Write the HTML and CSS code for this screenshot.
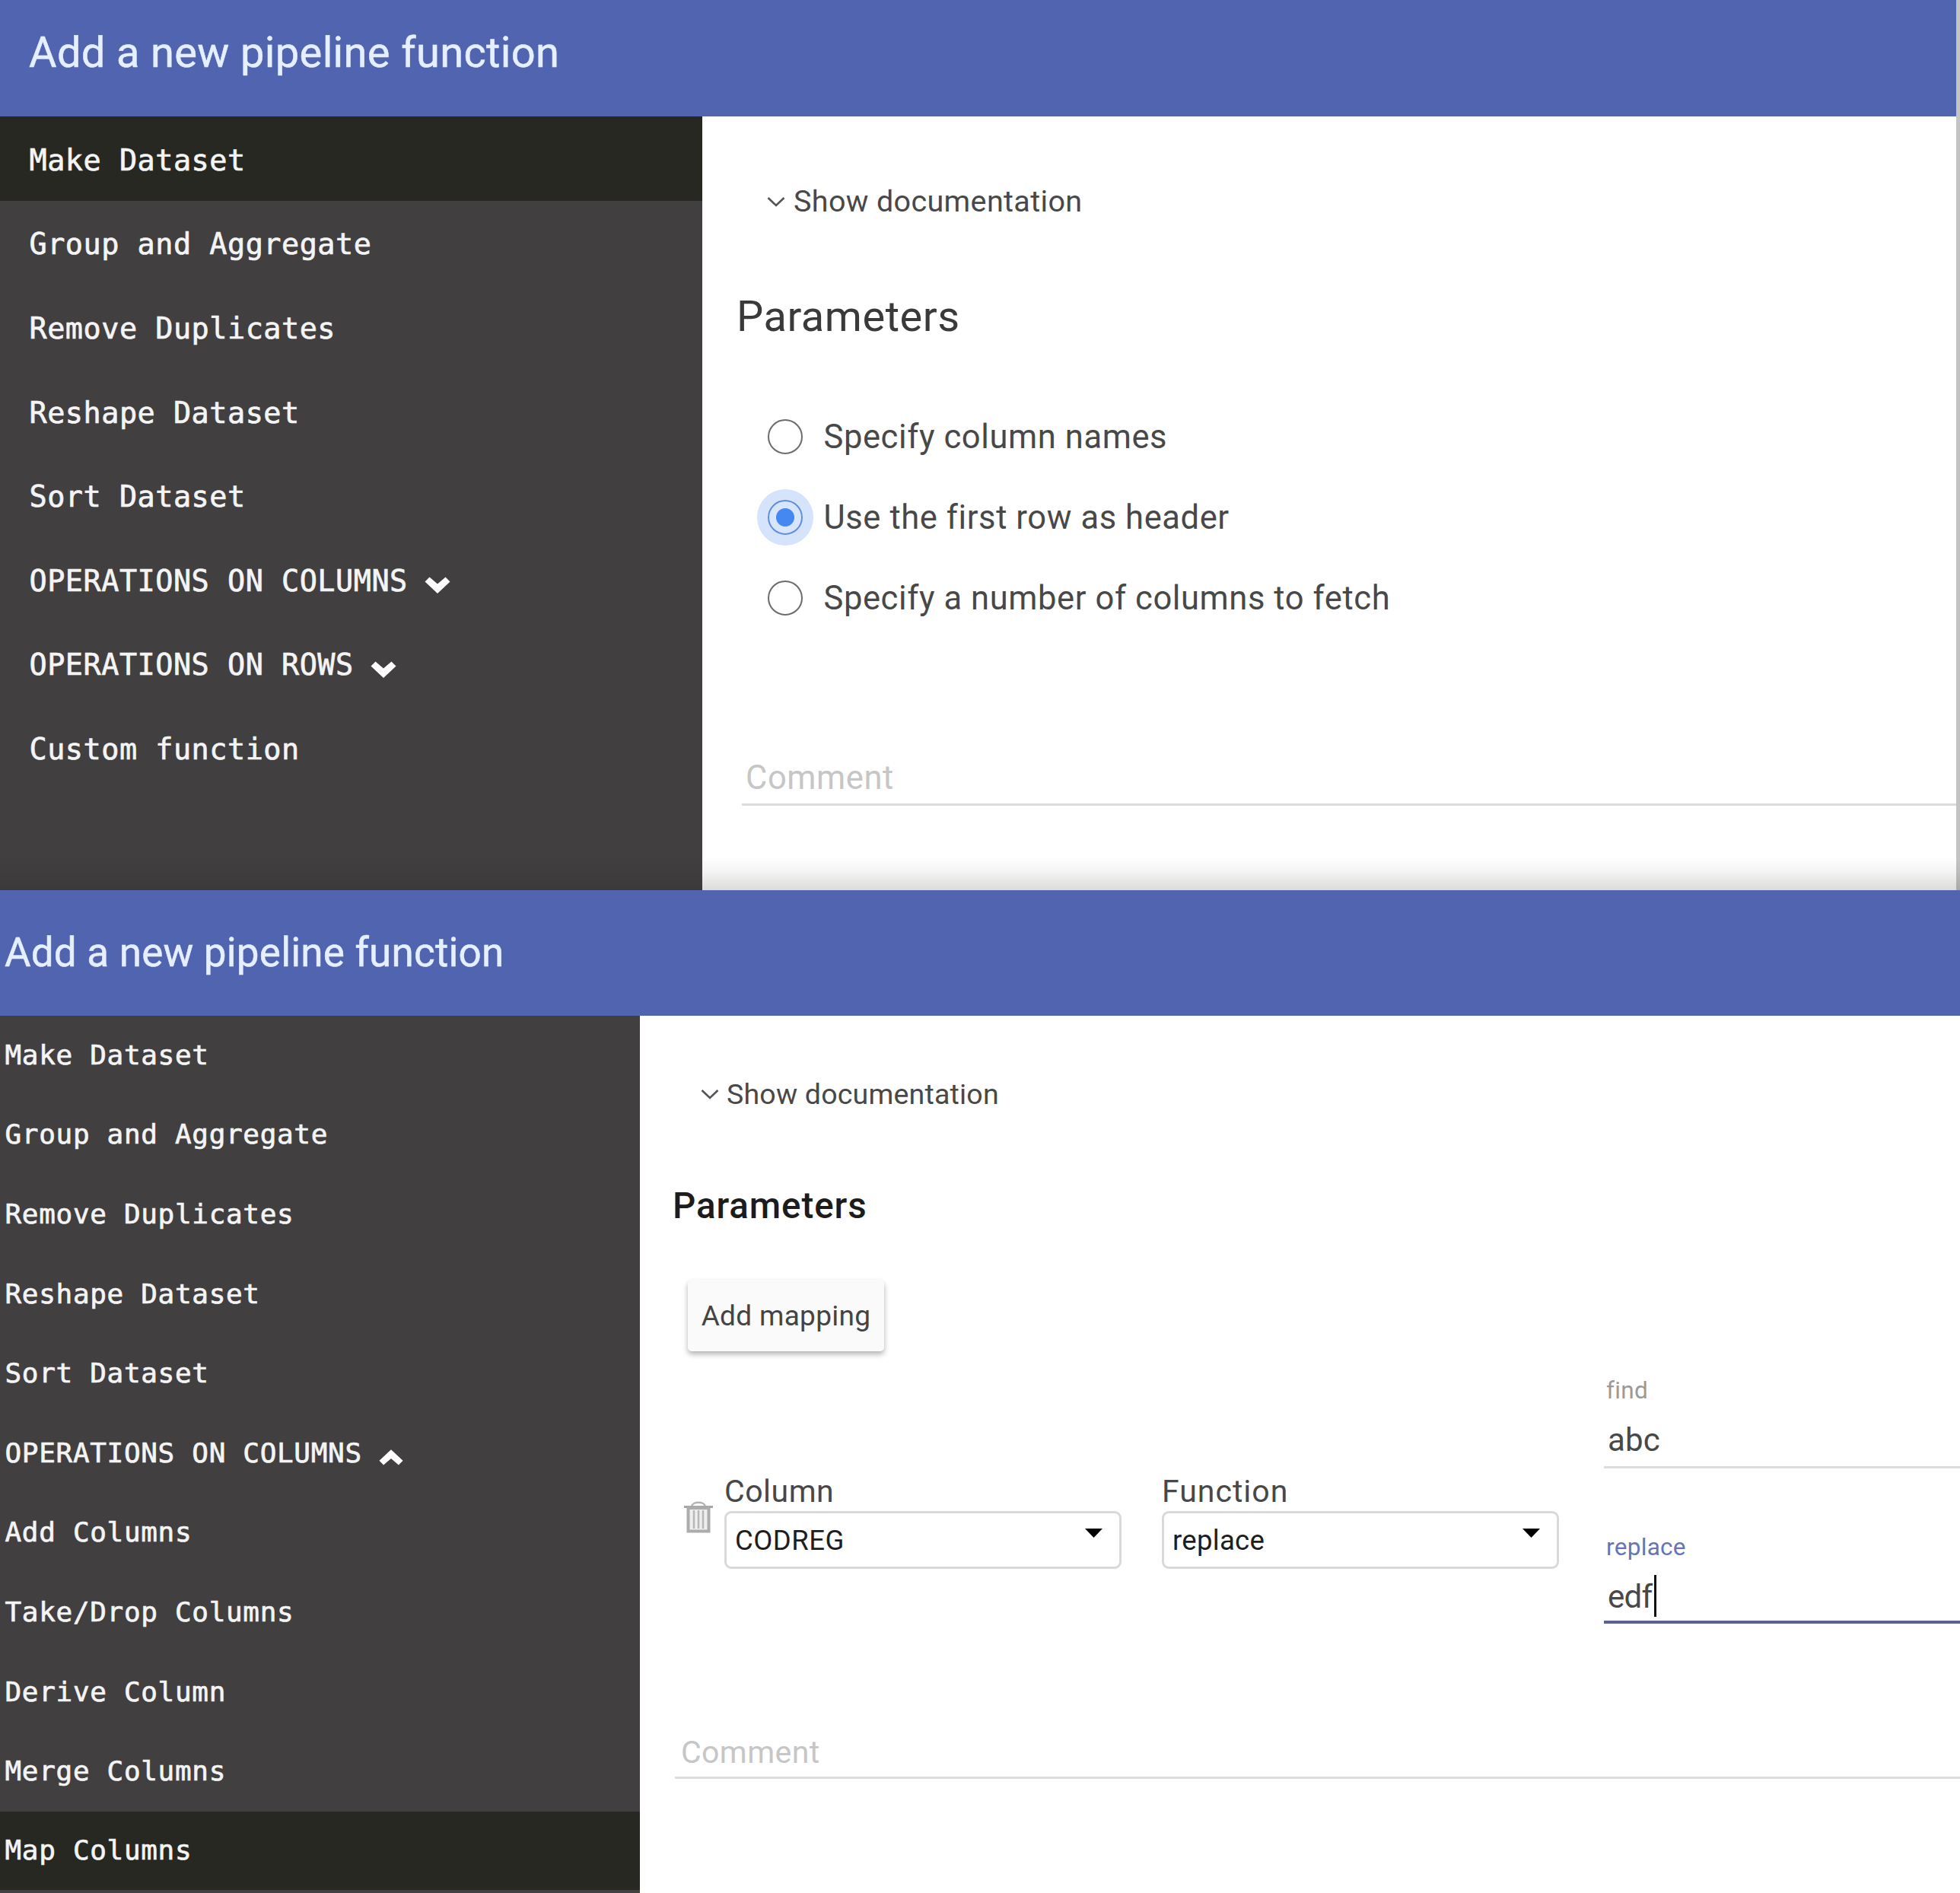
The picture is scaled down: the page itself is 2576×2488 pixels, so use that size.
FILE: index.html
```
<!DOCTYPE html>
<html lang="en">
<head>
<meta charset="utf-8">
<title>Add a new pipeline function</title>
<link rel="stylesheet" href="styles.css">
</head>
<body>
<section class="dialog dialog-make">
  <header class="bar"><h1>Add a new pipeline function</h1></header>
  <div class="body">
    <nav class="menu">
      <a class="item active">Make Dataset</a>
      <a class="item">Group and Aggregate</a>
      <a class="item">Remove Duplicates</a>
      <a class="item">Reshape Dataset</a>
      <a class="item">Sort Dataset</a>
      <a class="item">OPERATIONS ON COLUMNS<svg class="caret" viewBox="0 0 34 22"><path d="M0.5 6.500 6.500 0.5 17 9.500 27.500 0.500 33.500 6.500 17 22Z"/></svg></a>
      <a class="item">OPERATIONS ON ROWS<svg class="caret" viewBox="0 0 34 22"><path d="M0.5 6.500 6.500 0.5 17 9.500 27.500 0.500 33.500 6.500 17 22Z"/></svg></a>
      <a class="item">Custom function</a>
    </nav>
    <main class="content">
      <div class="doc"><svg class="chevron" viewBox="0 0 24 14"><path d="M1.500 2 12 12 22.500 2"/></svg><span>Show documentation</span></div>
      <h2 class="heading">Parameters</h2>
      <div class="options">
        <label class="option"><i class="radio"></i><span>Specify column names</span></label>
        <label class="option"><i class="radio checked"></i><span>Use the first row as header</span></label>
        <label class="option"><i class="radio"></i><span>Specify a number of columns to fetch</span></label>
      </div>
      <div class="comment">Comment</div>
    </main>
  </div>
</section>
<section class="dialog dialog-map">
  <header class="bar"><h1>Add a new pipeline function</h1></header>
  <div class="body">
    <nav class="menu">
      <a class="item">Make Dataset</a>
      <a class="item">Group and Aggregate</a>
      <a class="item">Remove Duplicates</a>
      <a class="item">Reshape Dataset</a>
      <a class="item">Sort Dataset</a>
      <a class="item">OPERATIONS ON COLUMNS<svg class="caret" viewBox="0 0 34 22"><path d="M0.5 15.500 6.500 21.5 17 12.500 27.500 21.500 33.500 15.500 17 0Z"/></svg></a>
      <a class="item">Add Columns</a>
      <a class="item">Take/Drop Columns</a>
      <a class="item">Derive Column</a>
      <a class="item">Merge Columns</a>
      <a class="item active">Map Columns</a>
    </nav>
    <main class="content">
      <div class="doc"><svg class="chevron" viewBox="0 0 24 14"><path d="M1.500 2 12 12 22.500 2"/></svg><span>Show documentation</span></div>
      <h2 class="heading">Parameters</h2>
      <button class="add">Add mapping</button>
      <div class="mapping">
        <svg class="trash" viewBox="0 0 38 43"><path d="M10 8C11 1 27 1 28 8" fill="none" stroke="#b4b4b4" stroke-width="2.500"/><path d="M0 7H38V10H0Z" fill="#a6a6a6"/><path d="M5.500 10H32.500V40.500H5.500Z" fill="#eee" stroke="#acacac" stroke-width="4"/><path d="M13 13V37M19 13V37M25 13V37" stroke="#b8b8b8" stroke-width="2.500"/></svg>
        <div class="pick pick-column"><span class="label">Column</span><div class="select">CODREG<svg class="arrow" viewBox="0 0 23 12"><path d="M0 0H23L11.500 12Z"/></svg></div></div>
        <div class="pick pick-function"><span class="label">Function</span><div class="select">replace<svg class="arrow" viewBox="0 0 23 12"><path d="M0 0H23L11.500 12Z"/></svg></div></div>
        <div class="args">
          <div class="arg"><span class="hint">find</span><div class="value">abc</div></div>
          <div class="arg focused"><span class="hint">replace</span><div class="value">edf<i class="cursor"></i></div></div>
        </div>
      </div>
      <div class="comment">Comment</div>
    </main>
  </div>
</section>
</body>
</html>
```
FILE: styles.css
```
* { box-sizing: border-box; }
body {
  margin: 0;
  width: 2576px;
  height: 2488px;
  overflow: hidden;
  background: #fff;
  color: #484848;
  font-family: Roboto, "Liberation Sans", sans-serif;
}
h1, h2 { margin: 0; font-weight: 400; }
svg { display: block; flex: none; }

.dialog { display: flex; flex-direction: column; }
.bar { flex: none; background: #5164af; color: #e6efff; }
.bar h1 { -webkit-text-stroke: .5px #e6efff; }
.body { flex: 1; display: flex; min-height: 0; }
.menu { flex: none; background: #413f40; color: #f4f4f4; }
.item {
  display: flex;
  align-items: center;
  white-space: pre;
  font-family: "DejaVu Sans Mono", monospace;
  -webkit-text-stroke: .7px #f4f4f4;
}
.active { background: #272822; }
.caret { width: 34px; height: 22px; fill: #fff; }
.content { flex: 1; min-width: 0; display: flex; flex-direction: column; }
.doc { display: flex; align-items: center; }
.chevron { width: 24px; height: 14px; fill: none; stroke: #555; stroke-width: 2.6; }
.comment { border-bottom: 3px solid #dcdcdc; color: #c6c6c6; line-height: 50px; }

/* Make Dataset dialog */
.dialog-make {
  position: relative;
  height: 1170px;
  background: linear-gradient(#c4c4c4, #c4c4c4) right / 5px 100% no-repeat;
  padding-right: 5px;
}
.dialog-make::after {
  content: "";
  position: absolute;
  left: 0;
  right: 0;
  bottom: 0;
  height: 44px;
  background: linear-gradient(rgba(30, 30, 20, 0), rgba(30, 30, 20, .05) 45%, rgba(30, 30, 20, .16));
}
.dialog-make .bar { height: 153px; padding: 37px 0 0 38px; }
.dialog-make h1 { font-size: 56px; line-height: 64px; letter-spacing: .35px; }
.dialog-make .menu { width: 923px; }
.dialog-make .item {
  height: 110.6px;
  padding: 4px 0 0 38.5px;
  font-size: 38.5px;
  letter-spacing: .5px;
}
.dialog-make .caret { margin: 12px 0 0 22px; }
.dialog-make .content { padding-top: 87px; }
.dialog-make .doc {
  margin-left: 85px;
  gap: 11px;
  font-size: 39.5px;
  line-height: 50px;
  letter-spacing: .35px;
}
.dialog-make .heading {
  margin: 91px 0 0 45px;
  font-size: 56px;
  line-height: 70px;
  letter-spacing: .5px;
  color: #3a3a3a;
}
.options { margin: 70px 0 0 86px; }
.option {
  display: flex;
  align-items: center;
  gap: 27.5px;
  height: 106px;
  font-size: 43.5px;
  letter-spacing: .6px;
}
.radio {
  width: 46px;
  height: 46px;
  border: 2.5px solid #6c6c6c;
  border-radius: 50%;
}
.radio.checked {
  border-color: #5b8fe0;
  background: radial-gradient(circle, #4688f1 11.5px, #d8e6fd 12.5px);
  box-shadow: 0 0 0 14px #d5e3fb;
}
.dialog-make .comment {
  height: 61px;
  margin: 159px 0 0 52px;
  padding-left: 5px;
  font-size: 43.5px;
  letter-spacing: .6px;
}

/* Map Columns dialog */
.dialog-map { height: 1318px; }
.dialog-map .bar { height: 165px; padding: 50px 0 0 6px; }
.dialog-map h1 { font-size: 53px; line-height: 64px; letter-spacing: .2px; }
.dialog-map .menu { width: 841px; }
.dialog-map .item {
  height: 104.6px;
  padding: 0 0 2px 6.5px;
  font-size: 36px;
  letter-spacing: .67px;
}
.dialog-map .active { height: 103.500px; }
.dialog-map .caret { width: 32px; height: 21px; margin: 12px 0 0 22px; }
.dialog-map .content { padding-top: 80px; }
.dialog-map .doc {
  margin-left: 80px;
  gap: 10px;
  font-size: 37.5px;
  line-height: 46px;
  letter-spacing: .2px;
}
.dialog-map .heading {
  margin: 94px 0 0 43px;
  font-size: 47.5px;
  line-height: 60px;
  letter-spacing: .9px;
  font-weight: 500;
  color: #1c1c1c;
}
.add {
  width: 258px;
  height: 94px;
  margin: 67px 0 0 63px;
  padding: 0;
  border: 0;
  border-radius: 5px;
  background: #fafafa;
  box-shadow: 0 4px 7px rgba(0, 0, 0, .3);
  color: #444;
  font: 400 37px Roboto, sans-serif;
  letter-spacing: .3px;
}
.mapping { display: flex; height: 358px; padding-left: 58px; }
.trash { width: 38px; height: 43px; margin-top: 196px; }
.pick { flex: none; width: 522px; margin-top: 160.5px; }
.pick-column { margin-left: 15px; }
.pick-function { margin-left: 53px; }
.label {
  display: block;
  font-size: 41px;
  line-height: 46px;
  letter-spacing: .5px;
}
.pick-function .label { letter-spacing: 1px; }
.select {
  display: flex;
  justify-content: space-between;
  height: 76px;
  margin-top: 3px;
  padding: 2px 22px 0 11px;
  border: 3px solid #d9d9d9;
  border-radius: 9px;
  color: #1e1e1e;
  font-size: 36.5px;
  line-height: 68px;
  letter-spacing: .5px;
}
.pick-function .select { letter-spacing: .3px; }
.arrow { width: 23px; height: 12px; margin-top: 18px; fill: #000; }
.args { flex: 1; margin: 34px 0 0 59px; }
.arg { border-bottom: 3px solid #dcdcdc; height: 120px; }
.hint {
  display: block;
  padding-left: 3px;
  font-size: 31.5px;
  line-height: 36px;
  letter-spacing: .3px;
  color: #9a9a9a;
}
.value {
  display: flex;
  margin-top: 22px;
  padding-left: 5px;
  font-size: 42px;
  line-height: 50px;
  letter-spacing: .2px;
}
.focused { height: 118px; margin-top: 86px; border-bottom: 4px solid #5a6293; }
.focused .hint { color: #6674b8; }
.focused .value { letter-spacing: -.7px; }
.cursor { width: 3px; height: 55px; margin: -4px 0 -1px 3px; background: #111; }
.dialog-map .comment {
  height: 60px;
  margin: 144px 0 0 46px;
  padding-left: 8px;
  font-size: 41px;
  letter-spacing: .4px;
}
```
